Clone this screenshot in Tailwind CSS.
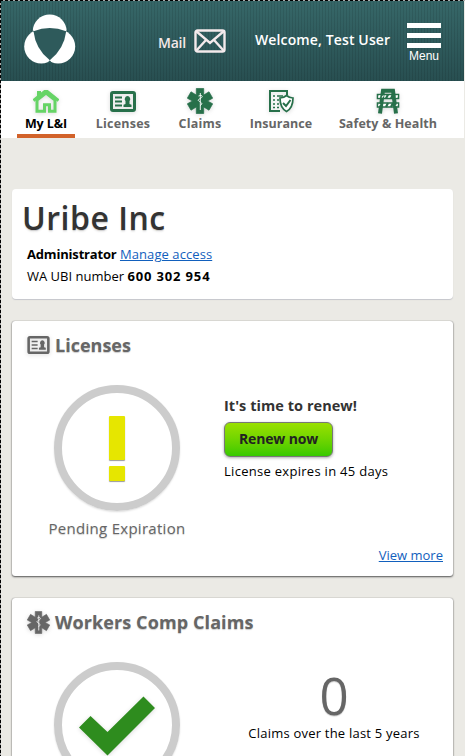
<!DOCTYPE html>
<html lang="en" class="overflow-hidden">
<head>
<meta charset="utf-8">
<title>My L&amp;I</title>
<script src="https://cdn.jsdelivr.net/npm/@tailwindcss/browser@4"></script>
</head>
<body class="relative h-[756px] overflow-hidden bg-[#ebeae5] pl-px pt-px pr-px font-['Open_Sans','Noto_Sans',sans-serif] text-[13px] text-black whitespace-nowrap">
<svg class="absolute h-0 w-0" aria-hidden="true">
  <symbol id="card" viewBox="0 0 26 21">
    <rect x="1.5" y="1.5" width="23" height="18" rx="1.5" fill="none" stroke="currentColor" stroke-width="3"/>
    <path d="M5 6.5h7M5 10.5h7M5 14.5h7" stroke="currentColor" stroke-width="1.8"/>
    <path d="M17.5 5a3 3 0 0 1 2 5v3l2 .8V16h-8v-2.200l2-.8v-3a3 3 0 0 1 2-5z" fill="currentColor"/>
  </symbol>
  <symbol id="star" viewBox="0 0 26 26">
    <path d="M9.300 .5h7.400v6.500l5.300-3.200 3.700 6.400-5.200 2.800 5.200 2.800-3.700 6.400-5.300-3.200v6.500H9.300v-6.500L4 22.200.3 15.800 5.500 13 .3 10.200 4 3.800l5.300 3.200z" fill="currentColor" stroke="currentColor" stroke-width=".7"/>
    <path d="M13.300 5v17M11.500 8c3.500-1.500 5 .5 2.500 2s-4 2-1.500 3.500 3.500 2.500 .5 4" stroke="#fff" stroke-width=".9" fill="none"/>
  </symbol>
</svg>
<div class="absolute inset-x-0 top-0 h-px bg-[repeating-linear-gradient(90deg,#000_0,#000_3px,#aaa_3px,#aaa_5px)]"></div>
<div class="absolute inset-y-0 left-0 w-px bg-[repeating-linear-gradient(180deg,#000_0,#000_3px,#aaa_3px,#aaa_5px)]"></div>

<header class="flex h-20 bg-[repeating-linear-gradient(90deg,#00000018_0,#00000018_1px,transparent_1px,transparent_3px),linear-gradient(#366768,#284f51)] text-white">
  <svg class="mt-3 ml-[22px] h-[52px] w-[54px]" viewBox="0 0 54 52">
    <g fill="#fff"><circle cx="26.700" cy="18.500" r="17"/><circle cx="18.200" cy="33.500" r="17"/><circle cx="35.200" cy="33.500" r="17"/></g>
    <path d="M10.500 18.200Q26.700 12 43.200 18.200Q41 36 26.800 47.300Q12.500 36 10.500 18.200z" fill="#2e5a5b"/>
    <path d="M9 17.600L11 18.500M44.500 17.600L42.500 18.500" stroke="#2e5a5b" stroke-width=".8"/>
    <path d="M24.500 50L26.800 47.300L29 50z" fill="#2e5a5b"/>
  </svg>
  <div class="mt-[30px] ml-[81px] w-9 text-[14px] leading-6 font-semibold tracking-[-0.2px] text-[#f4e8e8]">Mail</div>
  <svg class="mt-7 h-6 w-8" viewBox="0 0 32 24" fill="none" stroke="#f4eaec" stroke-width="2.400"><rect x="1.500" y="1.500" width="29" height="21" rx="2"/><path d="M2 2l14 12L30 2M2 22l10-11M30 22L20 11"/></svg>
  <div class="mt-[27px] ml-[29px] w-[152px] text-[14px] leading-6 font-semibold tracking-[0.130px]">Welcome, Test User</div>
  <div class="flex w-[34px] flex-col items-center pt-[22px]">
    <div class="flex w-full flex-col gap-[5px]"><i class="h-[5px] bg-white"></i><i class="h-[5px] bg-white"></i><i class="h-[5px] bg-white"></i></div>
    <div class="mt-px font-['Liberation_Sans',sans-serif] text-[12px] leading-3.5">Menu</div>
  </div>
</header>

<nav class="flex h-[57px] bg-white pl-4 text-[12.500px] leading-[17px] font-bold text-[#666]">
  <a class="flex w-[58px] flex-col items-center border-b-4 border-[#d2622a] text-black">
    <svg class="mt-[9px] h-[23px] w-[26px] shrink-0 text-[#66d466] drop-shadow-sm" viewBox="0 0 26 23"><path d="M4 10L13 3l9 7v11.200h-5.500v-6.500h-5v6.500H4z" fill="none" stroke="currentColor" stroke-width="3"/><path d="M.5 10.500L13 .5l12.500 10" fill="none" stroke="currentColor" stroke-width="3"/><path d="M4 1h4v5H4z" fill="currentColor"/></svg>
    <span class="mt-0.5 tracking-[-0.1px]">My L&amp;I</span>
  </a>
  <a class="ml-[15px] flex w-[66px] flex-col items-center">
    <svg class="mt-[10px] h-[21px] w-[26px] shrink-0 text-[#27704a] drop-shadow-sm"><use href="#card"/></svg>
    <span class="mt-[3px] tracking-[0.200px]">Licenses</span>
  </a>
  <a class="ml-[17px] flex w-[54px] flex-col items-center">
    <svg class="mt-[7px] h-[26px] w-[26px] shrink-0 text-[#27704a] drop-shadow-sm"><use href="#star"/></svg>
    <span class="mt-px tracking-[0.200px]">Claims</span>
  </a>
  <a class="ml-[18px] flex w-[72px] flex-col items-center">
    <svg class="mt-2 h-6 w-[26px] shrink-0 drop-shadow-sm" viewBox="0 0 26 24" fill="none" stroke="#27704a" stroke-width="2"><path d="M12 22H2V2h17v4"/><path d="M5 7h2M9 7h6M5 11h2M9 11h2M5 15h2M9 15h2M5 18.500h2M9 18.500h2" stroke-width="1.500"/><path d="M18.500 6.500q3 2.500 6.500 2.500 0 10-6.500 13.500Q12 19 12 9q3.500 0 6.500-2.500z" fill="#fff" stroke-width="1.700"/><path d="M15 14l3 3 4.500-6"/></svg>
    <span class="mt-0.5 tracking-[0.050px]">Insurance</span>
  </a>
  <a class="ml-[18px] flex w-[106px] flex-col items-center">
    <svg class="mt-[7px] h-[26px] w-6 shrink-0 drop-shadow-sm" viewBox="0 0 24 26"><g fill="none" stroke="#27704a"><path d="M1.500 6.500h21v4h-21zM1.500 15h21v4h-21z" fill="#fff" stroke-width="1.600"/><path d="M10 10.500l2-4M15 10.500l2-4M10 19l2-4M15 19l2-4" stroke-width="2.200"/><path d="M4 25.500L7 2.700h10l3 22.800" stroke-width="4"/><path d="M2.500 9.500l1.500-2M20 9.500l1.500-2M6 9.500l1.500-2M2.500 18l1.500-2M20 18l1.500-2" stroke="#fff" stroke-width="1.200"/></g></svg>
    <span class="mt-px tracking-[0.080px]">Safety &amp; Health</span>
  </a>
</nav>

<main class="mt-[51px] ml-[11px] w-[441px]">
  <section class="h-[110px] rounded-sm bg-white pt-[9px] pl-[10px] shadow-[0_1px_1px_#c5c6cb]">
    <h1 class="text-[32px] leading-10 font-semibold tracking-[0.500px] text-[#333] text-shadow-sm">Uribe Inc</h1>
    <div class="mt-[5px] pl-[5px] leading-[22px]"><b class="tracking-[-0.180px]">Administrator</b> <a class="tracking-[0.080px] text-[#1260bd] underline">Manage access</a></div>
    <div class="pl-[5px] leading-[22px]">WA UBI number <b class="tracking-[0.850px]">600 302 954</b></div>
  </section>

  <section class="mt-[22px] flex h-[255px] flex-col rounded-[3px] bg-white shadow-[0_1px_2px_#555,0_0_1px_#777]">
    <h2 class="flex h-12 items-center pl-[15px] text-[18px] font-bold text-[#666] text-shadow-xs"><svg class="mr-[5px] h-[18px] w-[23px] drop-shadow-sm"><use href="#card"/></svg>Licenses</h2>
    <div class="flex">
      <div class="mt-4 flex w-[210px] flex-col items-center">
        <div class="flex h-[126px] w-[126px] flex-col items-center gap-1.5 rounded-full border-8 border-[#ccc] pt-[23px] shadow-[0_1px_2px_#ddd]"><i class="h-11 w-4 rounded-[1px] bg-[#e6e600] shadow-[0_1px_1px_#999]"></i><i class="h-[15px] w-4 rounded-[1px] bg-[#e6e600] shadow-[0_1px_1px_#999]"></i></div>
        <div class="mt-[7px] text-[15px] leading-5 tracking-[0.280px] text-[#666] text-shadow-xs">Pending Expiration</div>
      </div>
      <div class="ml-0.5 pt-[27px]">
        <div class="text-[14.500px] leading-5 font-bold tracking-[0.050px] text-[#333]">It's time to renew!</div>
        <button class="mt-1.5 block h-[35px] w-[109px] rounded-md border border-[#777] bg-linear-to-b from-[#99e000] to-[#35c900] pb-0.5 text-[14px] font-bold tracking-[-0.150px] text-[#222] shadow-[0_1px_3px_#aaa]">Renew now</button>
        <div class="mt-1 leading-5 tracking-[0.290px]">License expires in 45 days</div>
      </div>
    </div>
    <a class="mt-auto mr-[10px] mb-[11px] self-end leading-5 text-[#1260bd] underline">View more</a>
  </section>

  <section class="mt-[22px] flex h-[158px] flex-col overflow-hidden rounded-t-[3px] bg-white shadow-[0_1px_2px_#555,0_0_1px_#777]">
    <h2 class="flex h-12 shrink-0 items-center pl-[15px] text-[18px] font-bold tracking-[0.100px] text-[#666] text-shadow-xs"><svg class="mr-[5px] h-[23px] w-[23px] drop-shadow-sm"><use href="#star"/></svg>Workers Comp Claims</h2>
    <div class="flex shrink-0">
      <div class="mt-4 flex w-[210px] justify-center">
        <div class="h-[126px] w-[126px] rounded-full border-8 border-[#ccc] shadow-[0_1px_2px_#ddd]"><svg class="mt-[26px] ml-[17px] h-[60px] w-[77px] drop-shadow-sm" viewBox="0 0 77 60"><path d="M0 31.500L11.500 20 28.500 36 64.500 .5 76 12 28.500 59.500z" fill="#2e8c1e"/></svg></div>
      </div>
      <div class="flex w-[224px] flex-col items-center pt-[18px]">
        <div class="text-[51px] leading-[62px] text-[#666] text-shadow-xs">0</div>
        <div class="-mt-[3px] leading-5 tracking-[0.220px]">Claims over the last 5 years</div>
      </div>
    </div>
  </section>
</main>
</body>
</html>
